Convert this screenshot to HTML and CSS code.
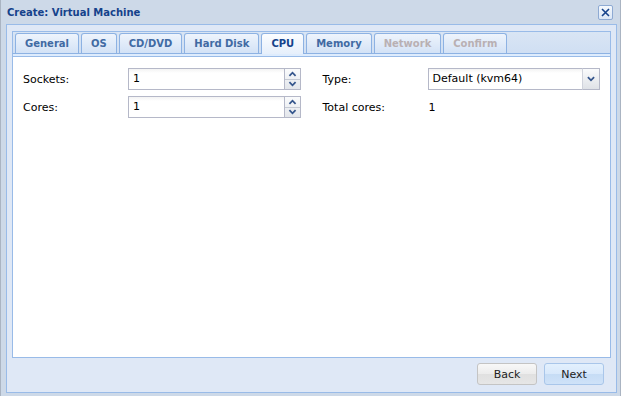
FILE: index.html
```html
<!DOCTYPE html>
<html lang="en">
<head>
    <meta charset="UTF-8">
    <title>Create: Virtual Machine</title>
    <link rel="stylesheet" href="styles.css">
</head>
<body>
    <div class="window">
        <div class="header">
            <span class="title">Create: Virtual Machine</span>
            <span class="close">
                <svg width="11" height="11" viewBox="0 0 11 11"><path d="M2 2 L9 9 M9 2 L2 9" stroke="#15428b" stroke-width="1.6" fill="none"/></svg>
            </span>
        </div>
        <div class="wbody">
            <div class="tabpanel">
                <ul class="tabs">
                    <li class="tab">General</li>
                    <li class="tab">OS</li>
                    <li class="tab">CD/DVD</li>
                    <li class="tab">Hard Disk</li>
                    <li class="tab active">CPU</li>
                    <li class="tab">Memory</li>
                    <li class="tab disabled">Network</li>
                    <li class="tab disabled">Confirm</li>
                </ul>
                <div class="spacer"></div>
                <div class="panel-body">
                    <div class="form">
                        <div class="field">
                            <label>Sockets:</label>
                            <div class="input-wrap">
                                <div class="input">1</div>
                                <div class="spin">
                                    <span class="spin-half"><svg width="17" height="10" viewBox="0 0 17 10"><polyline points="5,7 8.5,3.5 12,7" stroke="#34558c" stroke-width="2" fill="none"/></svg></span>
                                    <span class="spin-half"><svg width="17" height="10" viewBox="0 0 17 10"><polyline points="5,3 8.5,6.5 12,3" stroke="#34558c" stroke-width="2" fill="none"/></svg></span>
                                </div>
                            </div>
                        </div>
                        <div class="field">
                            <label>Type:</label>
                            <div class="input-wrap">
                                <div class="input">Default (kvm64)</div>
                                <div class="combo-btn">
                                    <svg width="18" height="20" viewBox="0 0 18 20"><polyline points="5.5,8 9,11.5 12.5,8" stroke="#34558c" stroke-width="2" fill="none"/></svg>
                                </div>
                            </div>
                        </div>
                        <div class="field">
                            <label>Cores:</label>
                            <div class="input-wrap">
                                <div class="input">1</div>
                                <div class="spin">
                                    <span class="spin-half"><svg width="17" height="10" viewBox="0 0 17 10"><polyline points="5,7 8.5,3.5 12,7" stroke="#34558c" stroke-width="2" fill="none"/></svg></span>
                                    <span class="spin-half"><svg width="17" height="10" viewBox="0 0 17 10"><polyline points="5,3 8.5,6.5 12,3" stroke="#34558c" stroke-width="2" fill="none"/></svg></span>
                                </div>
                            </div>
                        </div>
                        <div class="field">
                            <label>Total cores:</label>
                            <div class="value">1</div>
                        </div>
                    </div>
                </div>
            </div>
            <div class="footer">
                <button class="btn">Back</button>
                <button class="btn btn-next">Next</button>
            </div>
        </div>
    </div>
</body>
</html>
```

FILE: styles.css
```css
body {
    margin: 0;
    font-family: "DejaVu Sans", sans-serif;
    font-size: 11px;
    color: #000;
    background: #cdd9e8;
}
.window {
    width: 621px;
    height: 396px;
    box-sizing: border-box;
    display: flex;
    flex-direction: column;
    background: #cdd9e8;
    border-left: 1px solid #aab4c2;
    border-right: 1px solid #aab4c2;
}
.header {
    height: 24px;
    display: flex;
    align-items: center;
    justify-content: space-between;
    padding: 0 7px 0 6px;
}
.title {
    font-weight: bold;
    font-size: 10px;
    color: #15428b;
    margin-top: 1px;
}
.close {
    width: 13px;
    height: 13px;
    border: 1px solid #8eaad3;
    border-radius: 2px;
    background: linear-gradient(#f4f8fd, #dbe7f6);
    display: flex;
    align-items: center;
    justify-content: center;
    margin-top: 1px;
}
.wbody {
    flex: 1;
    margin: 0 3px 3px 5px;
    border: 1px solid #99bbe8;
    background: #dfe8f6;
    padding: 6px 5px 0 5px;
    display: flex;
    flex-direction: column;
}
.tabpanel {
    flex: 1;
    display: flex;
    flex-direction: column;
}
.tabs {
    list-style: none;
    margin: 0;
    padding: 1px 2px 0 2px;
    display: flex;
    gap: 2px;
    border: 1px solid #99bbe8;
    border-bottom-color: #8db2e3;
    background: linear-gradient(#d9e5f4, #d0dff3);
}
.tab {
    height: 19px;
    line-height: 19px;
    padding: 0 9px;
    font-weight: bold;
    font-size: 10px;
    color: #416aa3;
    border: 1px solid #8db2e3;
    border-bottom: none;
    border-radius: 3px 3px 0 0;
    background: linear-gradient(#eef4fc, #d3e2f6);
}
.tab.active {
    color: #15428b;
    background: linear-gradient(#fbfdff, #e6effb);
    height: 20px;
    margin-bottom: -1px;
}
.tab.disabled {
    color: #b9b0b3;
}
.spacer {
    height: 2px;
    background: #deecfd;
    border: 1px solid #99bbe8;
    border-top: none;
}
.panel-body {
    flex: 1;
    background: #fff;
    border: 1px solid #99bbe8;
    border-top: none;
}
.form {
    display: grid;
    grid-template-columns: 1fr 1fr;
    column-gap: 22px;
    row-gap: 6px;
    padding: 11px 10px 0 10px;
}
.field {
    display: flex;
    align-items: center;
    height: 22px;
}
.field label {
    width: 105px;
    flex: none;
}
.input-wrap {
    flex: 1;
    display: flex;
    height: 22px;
}
.input {
    flex: 1;
    box-sizing: border-box;
    border: 1px solid #b5b8c8;
    border-right: none;
    background: linear-gradient(#f3f3f3, #fff 4px);
    padding: 0 4px;
    line-height: 20px;
}
.spin {
    width: 17px;
    box-sizing: border-box;
    border: 1px solid #b5b8c8;
    display: flex;
    flex-direction: column;
    background: linear-gradient(#fafbfc, #e3e6eb);
}
.spin-half {
    flex: 1;
    display: flex;
    align-items: center;
    justify-content: center;
    overflow: hidden;
}
.spin-half + .spin-half {
    border-top: 1px solid #c5cad4;
}
.combo-btn {
    width: 18px;
    box-sizing: border-box;
    border: 1px solid #b5b8c8;
    border-left-color: #d0d3dc;
    background: linear-gradient(#fafbfc, #dfe2e7);
    display: flex;
    align-items: center;
    justify-content: center;
}
.value {
    padding-left: 1px;
}
.footer {
    display: flex;
    justify-content: flex-end;
    gap: 7px;
    padding: 5px 7px 7px 0;
}
.btn {
    width: 60px;
    height: 22px;
    font-family: "DejaVu Sans", sans-serif;
    font-size: 11px;
    color: #222;
    border: 1px solid #c4c4c4;
    border-radius: 3px;
    background: linear-gradient(#f8f8f8, #ececec 50%, #e0e0e0 51%, #e6e6e6);
    padding: 0;
}
.btn-next {
    border-color: #a9c6ea;
    background: linear-gradient(#e3f0fd, #d8e8fb 50%, #c6dcf5 51%, #cfe2f8);
}
```
